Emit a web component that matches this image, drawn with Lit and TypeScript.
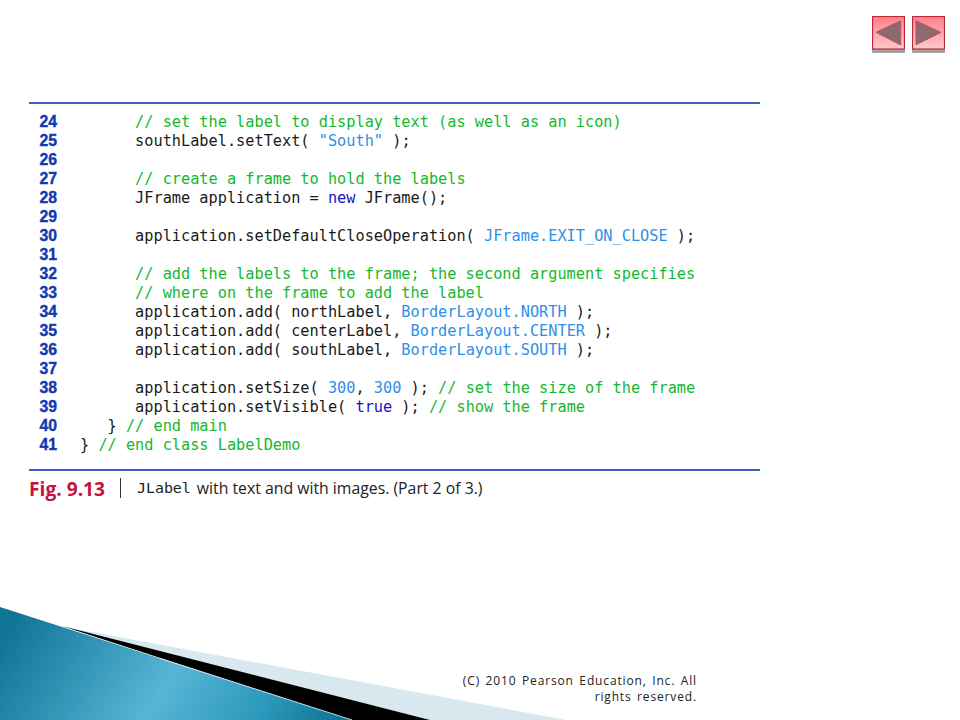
import { LitElement, html, css, svg } from "lit";
import { customElement } from "lit/decorators.js";

type Seg = [string, string];
const c = (t: string): Seg => ["cm", t];
const p = (t: string): Seg => ["pl", t];
const k = (t: string): Seg => ["kw", t];
const s = (t: string): Seg => ["st", t];

const LINES: [number, number, Seg[]][] = [
  [24, 6, [c("// set the label to display text (as well as an icon)")]],
  [25, 6, [p("southLabel.setText( "), s('"South"'), p(" );")]],
  [26, 0, []],
  [27, 6, [c("// create a frame to hold the labels")]],
  [28, 6, [p("JFrame application = "), k("new"), p(" JFrame();")]],
  [29, 0, []],
  [30, 6, [p("application.setDefaultCloseOperation( "), s("JFrame.EXIT_ON_CLOSE"), p(" );")]],
  [31, 0, []],
  [32, 6, [c("// add the labels to the frame; the second argument specifies")]],
  [33, 6, [c("// where on the frame to add the label")]],
  [34, 6, [p("application.add( northLabel, "), s("BorderLayout.NORTH"), p(" );")]],
  [35, 6, [p("application.add( centerLabel, "), s("BorderLayout.CENTER"), p(" );")]],
  [36, 6, [p("application.add( southLabel, "), s("BorderLayout.SOUTH"), p(" );")]],
  [37, 0, []],
  [38, 6, [p("application.setSize( "), s("300"), p(", "), s("300"), p(" ); "), c("// set the size of the frame")]],
  [39, 6, [p("application.setVisible( "), k("true"), p(" ); "), c("// show the frame")]],
  [40, 3, [p("} "), c("// end main")]],
  [41, 0, [p("} "), c("// end class LabelDemo")]],
];

@customElement("app-root")
export class AppRoot extends LitElement {
  static styles = css`
    :host {
      display: block;
      width: 960px;
      height: 720px;
      background: #fff;
      position: relative;
      overflow: hidden;
    }
    .deco {
      position: absolute;
      left: 0;
      top: 0;
      width: 960px;
      height: 720px;
    }
    .page {
      position: relative;
      height: 720px;
      display: flex;
      flex-direction: column;
      box-sizing: border-box;
    }
    .nav {
      display: flex;
      justify-content: flex-end;
      gap: 7px;
      padding: 16px 15px 0 0;
      height: 37px;
    }
    .btn {
      width: 33px;
      height: 37px;
      display: block;
    }
    .figure {
      margin: 49px 0 0 29px;
      width: 731px;
    }
    .rule {
      height: 2px;
      background: #3f5fc0;
    }
    .code {
      padding: 9px 0 14px;
      display: flex;
      flex-direction: column;
    }
    .row {
      display: flex;
      height: 19px;
      line-height: 19px;
      font-family: "DejaVu Sans Mono", monospace;
      font-size: 15.25px;
      white-space: pre;
      color: #1a1a1a;
    }
    .num {
      width: 51px;
      padding-left: 10.5px;
      box-sizing: border-box;
      flex: none;
      font-family: "Liberation Sans", sans-serif;
      font-weight: 700;
      font-size: 15.8px;
      line-height: 18px;
      color: #1238b0;
      -webkit-text-stroke: 0.35px #1238b0;
    }
    .cm { color: #14b82e; }
    .st { color: #2f8fe6; }
    .kw { color: #1414c8; }
    .pl { color: #1a1a1a; }
    .caption {
      display: flex;
      align-items: center;
      height: 38px;
      margin-top: -2px;
      font-family: "Open Sans", "Liberation Sans", sans-serif;
      font-size: 15.8px;
      color: #222;
    }
    .fig {
      font-weight: 700;
      font-size: 19.2px;
      color: #c8123c;
      width: 76px;
      flex: none;
      white-space: nowrap;
    }
    .sep {
      width: 1px;
      height: 20px;
      background: #333;
      margin: 0 16px 0 15px;
      flex: none;
    }
    .mono {
      font-family: "DejaVu Sans Mono", monospace;
      font-size: 14.9px;
      margin-right: 6px;
    }
    .footer {
      margin: auto 263px 15px auto;
      width: 240px;
      text-align: right;
      font-family: "Open Sans", sans-serif;
      font-size: 12px;
      line-height: 16px;
      letter-spacing: 0.85px;
      word-spacing: 1.6px;
      color: #222;
    }
  `;

  private arrow(points: string, id: string) {
    return html`<svg class="btn" viewBox="0 0 33 37" aria-hidden="true">
      <defs>
        <linearGradient id=${id} x1="0" y1="0" x2="0" y2="1">
          <stop offset="0" stop-color="#ff8088"></stop>
          <stop offset="1" stop-color="#ffc8ca"></stop>
        </linearGradient>
      </defs>
      <rect x="0" y="33" width="33" height="4" fill="#a3a3a3"></rect>
      <rect x="0.5" y="0.5" width="32" height="32.5" fill="url(#${id})" stroke="#bd2a3e" stroke-width="1.2"></rect>
      <polygon points=${points} fill="#8b6a70" stroke="#b8485a" stroke-width="0.8"></polygon>
    </svg>`;
  }

  render() {
    return html`
      <svg class="deco" viewBox="0 0 960 720" aria-hidden="true">
        <defs>
          <linearGradient id="teal" gradientUnits="userSpaceOnUse" x1="12" y1="620" x2="291" y2="796">
            <stop offset="0" stop-color="#0c7394"></stop>
            <stop offset="0.5" stop-color="#55b4d5"></stop>
            <stop offset="0.78" stop-color="#2a98bb"></stop>
            <stop offset="1" stop-color="#0c7394"></stop>
          </linearGradient>
          <pattern id="stripes" patternUnits="userSpaceOnUse" width="5" height="5" patternTransform="rotate(-25)">
            <rect x="0" y="0" width="2.5" height="5" fill="#fff" opacity="0.025"></rect>
          </pattern>
        </defs>
        ${svg`
          <polygon points="65,627 566,720 430,720" fill="#d8e8ef"></polygon>
          <polygon points="62,626 430,720 352,720" fill="#000"></polygon>
          <polygon points="0,607 352,720 0,720" fill="url(#teal)"></polygon>
          <polygon points="0,607 352,720 0,720" fill="url(#stripes)"></polygon>
          <line x1="160" y1="658.5" x2="352" y2="720" stroke="#cfe5ee" stroke-width="1" opacity="0.8"></line>
        `}
      </svg>
      <div class="page">
        <div class="nav">
          ${this.arrow("4,16.3 28.7,4.7 28.7,29", "ga")}
          ${this.arrow("4,4.7 4,28.7 29,16.5", "gb")}
        </div>
        <div class="figure">
          <div class="rule"></div>
          <div class="code">
            ${LINES.map(
              ([n, indent, segs]) => html`<div class="row"><span class="num">${n}</span><span>${" ".repeat(indent)}${segs.map(
                ([cls, t]) => html`<span class=${cls}>${t}</span>`
              )}</span></div>`
            )}
          </div>
          <div class="rule"></div>
          <div class="caption">
            <span class="fig">Fig. 9.13</span>
            <span class="sep"></span>
            <span class="mono">JLabel</span>
            <span>with text and with images. (Part 2 of 3.)</span>
          </div>
        </div>
        <div class="footer">(C) 2010 Pearson Education, Inc. All rights reserved.</div>
      </div>
    `;
  }
}
